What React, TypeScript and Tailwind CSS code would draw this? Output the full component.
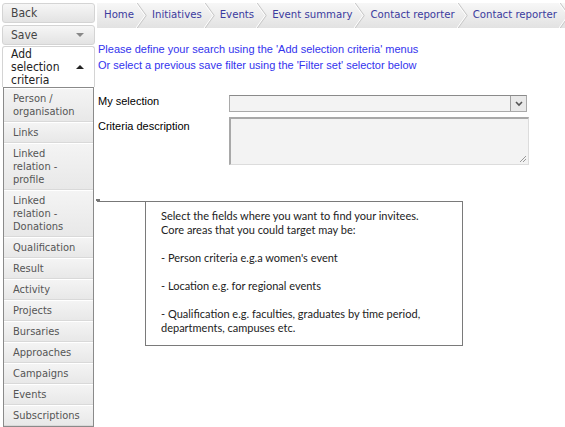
import React from "react";

const crumbs = ["Home", "Initiatives", "Events", "Event summary", "Contact reporter", "Contact reporter"];

const criteria = [
  ["Person /", "organisation"],
  ["Links"],
  ["Linked", "relation -", "profile"],
  ["Linked", "relation -", "Donations"],
  ["Qualification"],
  ["Result"],
  ["Activity"],
  ["Projects"],
  ["Bursaries"],
  ["Approaches"],
  ["Campaigns"],
  ["Events"],
  ["Subscriptions"],
];

function Chevron() {
  return (
    <svg width="11" height="25" viewBox="0 0 11 25" className="shrink-0">
      <polyline points="1,0 10,12.5 1,25" fill="none" stroke="#c9c9c9" strokeWidth="1.2" />
      <polyline points="0,0 9,12.5 0,25" fill="none" stroke="#ffffff" strokeWidth="1" />
    </svg>
  );
}

function Sidebar() {
  return (
    <aside className="flex w-[95px] shrink-0 flex-col pt-[3px] pl-[2px] font-['DejaVu_Sans_Condensed','DejaVu_Sans',sans-serif] text-[#444]">
      {/* top buttons */}
      <div className="flex h-[20px] items-center rounded-[3px] border border-[#d4d4d4] bg-gradient-to-b from-[#f6f6f6] to-[#e3e3e3] pl-[8px] text-[12px]">
        Back
      </div>
      <div className="mt-[2px] flex h-[20px] items-center justify-between rounded-[3px] border border-[#d4d4d4] bg-gradient-to-b from-[#f6f6f6] to-[#e3e3e3] pr-[10px] pl-[8px] text-[12px]">
        <span>Save</span>
        <span className="h-0 w-0 border-x-[4px] border-t-[4px] border-x-transparent border-t-[#888]" />
      </div>
      <div className="mt-[1px] flex h-[44px] items-center justify-between rounded-t-[3px] border border-b-0 border-[#d4d4d4] bg-white pr-[10px] pl-[8px] text-[12px] leading-[13px] text-[#222]">
        <span>
          Add
          <br />
          selection
          <br />
          criteria
        </span>
        <span className="h-0 w-0 border-x-[4px] border-b-[4px] border-x-transparent border-b-[#222]" />
      </div>
      {/* criteria list */}
      <div className="ml-[1px] flex w-[91px] flex-col border border-[#8a8a8a] bg-[#f0f0f0] text-[11px] leading-[13px] text-[#555]">
        {criteria.map((lines, i) => (
          <div
            key={i}
            className="border-t border-b border-t-white border-b-[#d9d9d9] bg-gradient-to-b from-[#f4f4f4] to-[#e8e8e8] py-[3px] pl-[9px]"
          >
            {lines.map((l, j) => (
              <div key={j}>{l}</div>
            ))}
          </div>
        ))}
      </div>
    </aside>
  );
}

export default function App() {
  return (
    <div className="relative flex h-[427px] w-[565px] overflow-hidden bg-white">
      <Sidebar />
      <main className="flex min-w-0 flex-1 flex-col pt-[3px] pl-[2px]">
        {/* breadcrumb */}
        <nav className="flex h-[25px] items-center overflow-hidden bg-gradient-to-b from-[#f7f7f7] to-[#e2e2e2] font-['DejaVu_Sans_Condensed','DejaVu_Sans',sans-serif] text-[11.3px] whitespace-nowrap text-[#3b3b9e]">
          {crumbs.map((c, i) => (
            <div key={i} className="flex items-center">
              <span className={i === 0 ? "pr-[2px] pl-[7px]" : "pr-[2px] pl-[5px]"}>{c}</span>
              <Chevron />
            </div>
          ))}
        </nav>

        <div className="mt-[13px] pl-[1px] font-['Liberation_Sans',Arial,sans-serif] text-[11px] leading-[16px] text-[#3333ee]">
          <p>Please define your search using the 'Add selection criteria' menus</p>
          <p>Or select a previous save filter using the 'Filter set' selector below</p>
        </div>

        <div className="mt-[22px] flex flex-col gap-[5px] pl-[1px] font-['Liberation_Sans',Arial,sans-serif] text-[11px] text-black">
          <div className="flex items-start">
            <label className="-mt-[2px] w-[131px] shrink-0">My selection</label>
            <div className="flex h-[17px] w-[298px] items-stretch border border-[#a9a9a9] border-t-[#8a8a8a] bg-[#f3f3f3]">
              <div className="flex-1" />
              <div className="flex w-[16px] items-center justify-center border-l border-[#a0a0a0] bg-[#e9e9e9]">
                <svg width="8" height="6" viewBox="0 0 8 6">
                  <polyline points="1,1 4,4 7,1" fill="none" stroke="#555" strokeWidth="1.6" />
                </svg>
              </div>
            </div>
          </div>
          <div className="flex items-start">
            <label className="w-[131px] shrink-0 pt-[1px]">Criteria description</label>
            <div className="relative h-[48px] w-[300px] border border-[#dcdcdc] border-t-2 border-t-[#a8a8a8] border-l-2 border-l-[#a8a8a8] bg-[#f3f3f3]">
              <svg width="8" height="8" viewBox="0 0 8 8" className="absolute right-[1px] bottom-[1px]">
                <line x1="1" y1="7" x2="7" y2="1" stroke="#999" />
                <line x1="4" y1="7" x2="7" y2="4" stroke="#999" />
              </svg>
            </div>
          </div>
        </div>
      </main>

      {/* help tooltip */}
      <div className="absolute top-[199px] left-[96px] h-[2px] w-[4px] bg-[#777]" />
      <div className="absolute top-[201px] left-[97px] h-px w-[48px] bg-[#777]" />
      <div className="absolute top-[201px] left-[145px] w-[318px] border border-[#7a7a7a] bg-white pt-[7px] pr-[8px] pb-[10px] pl-[15px] font-['Lato',sans-serif] text-[11px] leading-[14px] text-[#222]">
        <p>Select the fields where you want to find your invitees.</p>
        <p>Core areas that you could target may be:</p>
        <p className="mt-[14px]">- Person criteria e.g.a women's event</p>
        <p className="mt-[14px]">- Location e.g. for regional events</p>
        <p className="mt-[14px]">- Qualification e.g. faculties, graduates by time period, departments, campuses etc.</p>
      </div>
    </div>
  );
}
